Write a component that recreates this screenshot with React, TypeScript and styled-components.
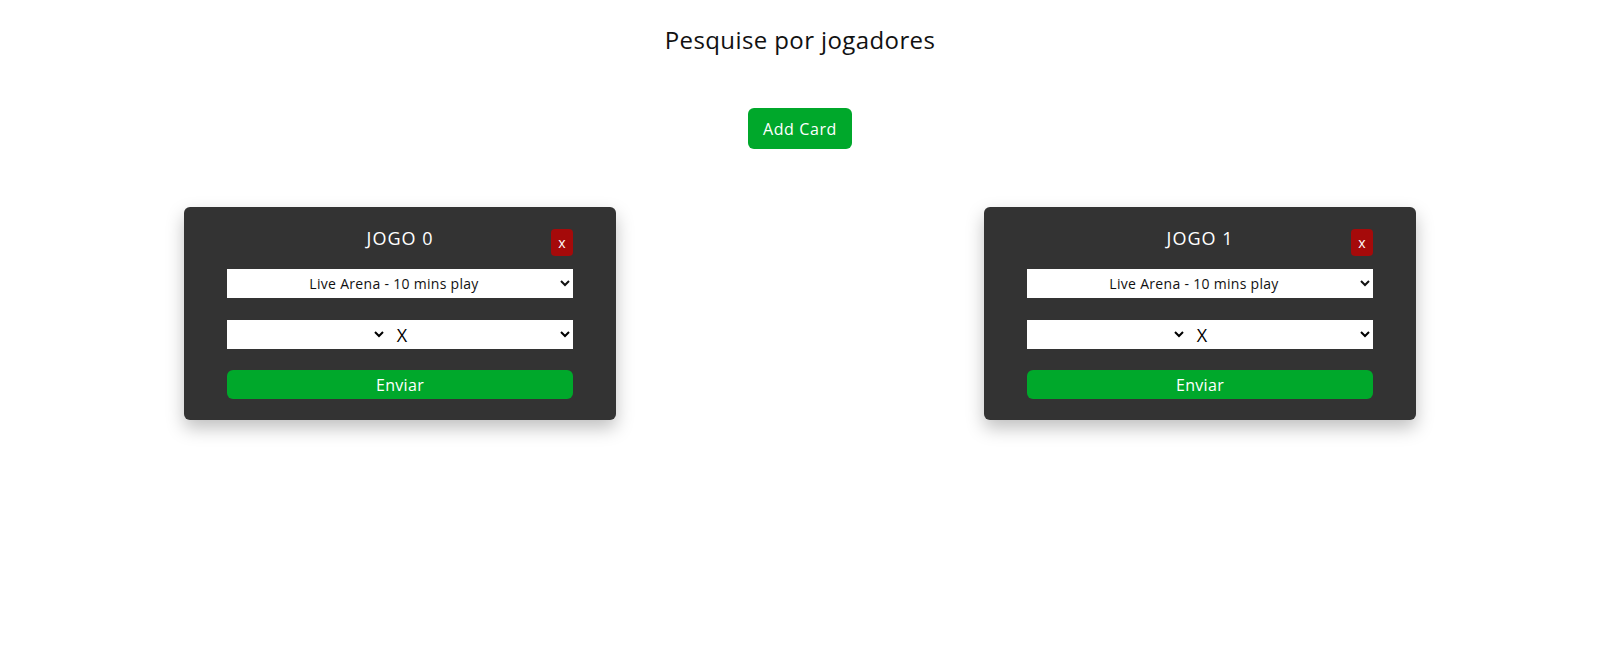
import styled, { createGlobalStyle } from "styled-components";

const GlobalStyle = createGlobalStyle`
    html, body {
        margin: 0;
        padding: 0;
        background: #ffffff;
        font-family: "Open Sans", "Liberation Sans", sans-serif;
    }
`;

const games = [0, 1];

const Card = ({ index }: { index: number }) => {
    return <CardWrapper>
        <CardHeader>
            <span />
            <CardTitle>JOGO {index}</CardTitle>
            <CloseBtn>x</CloseBtn>
        </CardHeader>
        <ModeSelect defaultValue="live">
            <option value="live">Live Arena - 10 mins play</option>
        </ModeSelect>
        <VersusRow>
            <PlayerSelect />
            <VersusLabel>X</VersusLabel>
            <PlayerSelect />
        </VersusRow>
        <SendBtn>Enviar</SendBtn>
    </CardWrapper>
};

const App = () => {
    return <Page>
        <GlobalStyle />
        <Title>Pesquise por jogadores</Title>
        <AddBtn>Add Card</AddBtn>
        <CardGrid>
            {games.map(i => <Card key={i} index={i} />)}
        </CardGrid>
    </Page>
};

const Page = styled.div`
    width: 100%;
    min-height: 657px;
    display: flex;
    flex-direction: column;
    align-items: center;
    padding-top: 24px;
    box-sizing: border-box;
`;
const Title = styled.h1`
    margin: 0;
    font-size: 24px;
    font-weight: 400;
    letter-spacing: 0.4px;
    line-height: 32px;
    color: #111111;
`;
const AddBtn = styled.button`
    margin-top: 52px;
    height: 41px;
    padding: 0 15px;
    border: none;
    border-radius: 6px;
    background-color: #00a82b;
    color: #ffffff;
    font-family: inherit;
    font-size: 16px;
    letter-spacing: 0.6px;
    cursor: pointer;
`;
const CardGrid = styled.div`
    width: 100%;
    margin-top: 58px;
    display: grid;
    grid-template-columns: 1fr 1fr;
    justify-items: center;
`;
const CardWrapper = styled.div`
    width: 432px;
    box-sizing: border-box;
    padding: 22px 43px 21px 43px;
    background-color: #333333;
    border-radius: 6px;
    box-shadow: 0 8px 18px rgba(0, 0, 0, 0.25);
    display: flex;
    flex-direction: column;
`;
const CardHeader = styled.div`
    display: grid;
    grid-template-columns: 1fr auto 1fr;
    align-items: start;
    margin-bottom: 13px;
`;
const CardTitle = styled.span`
    color: #ffffff;
    font-size: 18px;
    letter-spacing: 1px;
    line-height: 19px;
`;
const CloseBtn = styled.button`
    justify-self: end;
    width: 22px;
    height: 27px;
    padding: 0;
    border: none;
    border-radius: 4px;
    background-color: #a50a0a;
    color: #ffffff;
    font-family: inherit;
    font-size: 14px;
    cursor: pointer;
`;
const ModeSelect = styled.select`
    width: 100%;
    height: 29px;
    border: none;
    border-radius: 0;
    background-color: #ffffff;
    color: #111111;
    font-family: inherit;
    font-size: 14px;
    letter-spacing: 0.3px;
    text-align: center;
    text-align-last: center;
    margin-bottom: 22px;
`;
const VersusRow = styled.div`
    height: 29px;
    display: grid;
    grid-template-columns: 1fr auto 1fr;
    align-items: center;
    background-color: #ffffff;
    margin-bottom: 21px;
`;
const PlayerSelect = styled.select`
    height: 29px;
    border: none;
    background-color: #ffffff;
    font-family: inherit;
`;
const VersusLabel = styled.span`
    padding: 0 6px 0 10px;
    font-size: 18px;
    color: #000000;
`;
const SendBtn = styled.button`
    height: 29px;
    border: none;
    border-radius: 6px;
    background-color: #00a82b;
    color: #ffffff;
    font-family: inherit;
    font-size: 16px;
    letter-spacing: 0.3px;
    cursor: pointer;
`;

export default App;
